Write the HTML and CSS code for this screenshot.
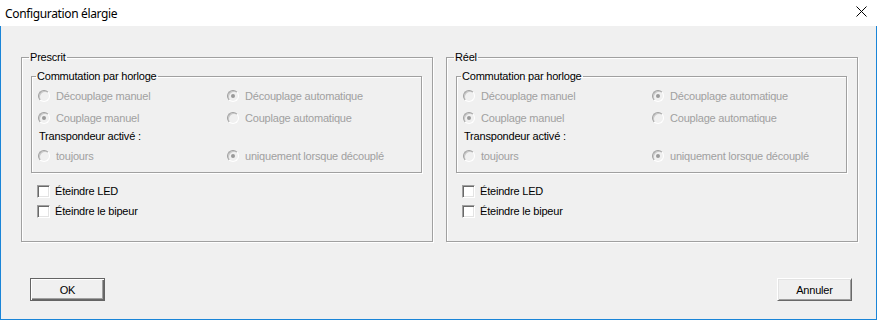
FILE: index.html
```html
<!DOCTYPE html>
<html lang="fr">
<head>
    <meta charset="UTF-8">
    <title>Configuration élargie</title>
    <link rel="stylesheet" href="styles.css">
</head>
<body>
    <div class="window">
        <div class="titlebar">
            <span class="title">Configuration élargie</span>
            <svg class="close" width="11" height="11" viewBox="0 0 11 11">
                <path d="M0.5 0.5 L10.5 10.5 M10.5 0.5 L0.5 10.5" stroke="#000" stroke-width="1" fill="none"/>
            </svg>
        </div>
        <div class="client">
            <div class="groups">
                <fieldset class="group">
                    <legend>Prescrit</legend>
                    <fieldset class="subgroup">
                        <legend>Commutation par horloge</legend>
                        <div class="options">
                            <div class="opt"><span class="radio"></span>Découplage manuel</div>
                            <div class="opt"><span class="radio checked"></span>Découplage automatique</div>
                            <div class="opt"><span class="radio checked"></span>Couplage manuel</div>
                            <div class="opt"><span class="radio"></span>Couplage automatique</div>
                            <div class="label">Transpondeur activé :</div>
                            <div class="opt"><span class="radio"></span>toujours</div>
                            <div class="opt"><span class="radio checked"></span>uniquement lorsque découplé</div>
                        </div>
                    </fieldset>
                    <div class="checks">
                        <div class="check"><span class="box"></span>Éteindre LED</div>
                        <div class="check"><span class="box"></span>Éteindre le bipeur</div>
                    </div>
                </fieldset>

                <fieldset class="group">
                    <legend>Réel</legend>
                    <fieldset class="subgroup">
                        <legend>Commutation par horloge</legend>
                        <div class="options">
                            <div class="opt"><span class="radio"></span>Découplage manuel</div>
                            <div class="opt"><span class="radio checked"></span>Découplage automatique</div>
                            <div class="opt"><span class="radio checked"></span>Couplage manuel</div>
                            <div class="opt"><span class="radio"></span>Couplage automatique</div>
                            <div class="label">Transpondeur activé :</div>
                            <div class="opt"><span class="radio"></span>toujours</div>
                            <div class="opt"><span class="radio checked"></span>uniquement lorsque découplé</div>
                        </div>
                    </fieldset>
                    <div class="checks">
                        <div class="check"><span class="box"></span>Éteindre LED</div>
                        <div class="check"><span class="box"></span>Éteindre le bipeur</div>
                    </div>
                </fieldset>
            </div>

            <div class="buttons">
                <button class="btn default">OK</button>
                <button class="btn">Annuler</button>
            </div>
        </div>
    </div>
</body>
</html>
```

FILE: styles.css
```css
body {
    margin: 0;
    background: #ffffff;
    font-family: "Liberation Sans", Arial, sans-serif;
    font-size: 11px;
    letter-spacing: -0.2px;
    color: #000;
}

.window {
    width: 877px;
    height: 320px;
    display: flex;
    flex-direction: column;
}

.titlebar {
    height: 26px;
    background: #ffffff;
    display: flex;
    align-items: center;
    justify-content: space-between;
    padding: 0 10px 0 5px;
}

.title {
    font-family: "Noto Sans", sans-serif;
    font-size: 12px;
    letter-spacing: -0.35px;
    color: #000;
}

.close {
    display: block;
    margin-top: -3px;
}

.client {
    flex: 1;
    background: #f0f0f0;
    border: 1px solid #1a85d8;
    border-top: none;
    padding: 25px 0 0 20px;
    display: flex;
    flex-direction: column;
}

.groups {
    display: flex;
    gap: 13px;
}

/* cadres */
fieldset {
    margin: 0;
    min-width: 0;
    border: 1px solid #a0a0a0;
    box-shadow: 1px 1px 0 #ffffff, inset 1px 1px 0 #ffffff;
}

legend {
    line-height: 13px;
    height: 13px;
    padding: 0 1px;
}

.group {
    width: 412px;
    box-sizing: border-box;
    padding: 6px 10px 23px 9px;
}

.group > legend {
    margin-left: -2px;
}

.subgroup {
    padding: 6px 0 9px 6px;
}

.subgroup > legend {
    margin-left: -2px;
}

.options {
    display: grid;
    grid-template-columns: 189px 1fr;
    grid-template-rows: 22px 18px 20px 14px;
    color: #a0a0a0;
}

.opt, .label, .check {
    height: 14px;
    line-height: 14px;
    display: flex;
    align-items: center;
    white-space: nowrap;
}

.label {
    grid-column: 1 / 3;
    color: #000;
    padding-left: 1px;
}

.radio {
    width: 12px;
    height: 12px;
    box-sizing: border-box;
    border-radius: 50%;
    border: 1px solid;
    border-color: #a0a0a0 #ffffff #ffffff #a0a0a0;
    background: #f0f0f0;
    box-shadow: inset 1px 1px 0 #c8c8c8;
    margin-right: 6px;
    display: flex;
    align-items: center;
    justify-content: center;
    flex-shrink: 0;
}

.radio.checked::after {
    content: "";
    width: 4px;
    height: 4px;
    border-radius: 50%;
    background: #9a9a9a;
}

.checks {
    margin-top: 11px;
    padding-left: 6px;
    display: flex;
    flex-direction: column;
    gap: 6px;
}

.box {
    width: 13px;
    height: 13px;
    box-sizing: border-box;
    border: 1px solid;
    border-color: #a0a0a0 #ffffff #ffffff #a0a0a0;
    background: #ffffff;
    box-shadow: inset 1px 1px 0 #696969, inset -1px -1px 0 #e3e3e3;
    margin-right: 5px;
    flex-shrink: 0;
}

.buttons {
    display: flex;
    justify-content: space-between;
    margin-top: 36px;
    padding: 0 24px 0 9px;
}

.btn {
    width: 75px;
    height: 23px;
    box-sizing: border-box;
    padding: 0;
    font-family: "Liberation Sans", Arial, sans-serif;
    font-size: 11px;
    letter-spacing: -0.2px;
    color: #000;
    background: #f0f0f0;
    border: 1px solid;
    border-color: #ffffff #696969 #696969 #ffffff;
    box-shadow: inset 1px 1px 0 #e3e3e3, inset -1px -1px 0 #a0a0a0;
}

.btn.default {
    border-color: #646464;
    box-shadow: inset 1px 1px 0 #ffffff, inset -1px -1px 0 #696969, inset -2px -2px 0 #a0a0a0;
}
```
